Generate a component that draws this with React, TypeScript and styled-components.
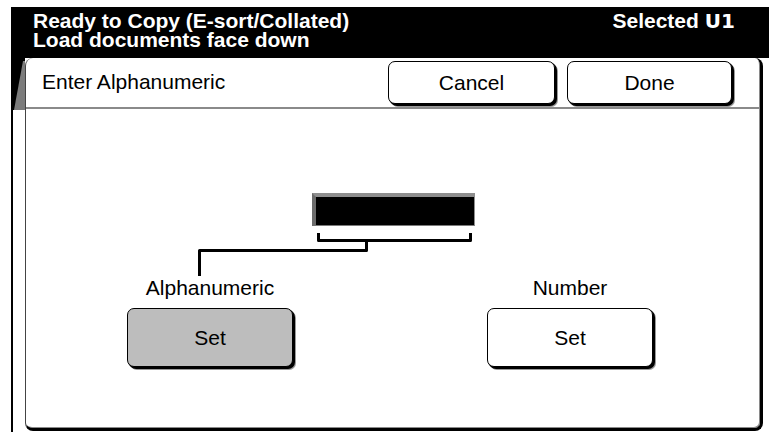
import styled, { createGlobalStyle } from "styled-components";

const GlobalStyle = createGlobalStyle`
    html, body {
        margin: 0;
        padding: 0;
        background: #fff;
    }
    body {
        font-family: "Liberation Sans", Arial, sans-serif;
        color: #000;
    }
`

const Screen = styled.div`
    width: 769px;
    height: 432px;
    padding: 7px 0 0 11px;
    box-sizing: border-box;
    display: flex;
    flex-direction: column;
    overflow: hidden;
`

const StatusBar = styled.div`
    height: 51px;
    flex: none;
    background: #000;
    color: #fff;
    display: flex;
    justify-content: space-between;
    align-items: flex-start;
    padding: 4px 34px 0 22px;
    box-sizing: border-box;
    font-weight: bold;
    font-size: 21px;
    line-height: 19px;
`

const StatusText = styled.div`
    white-space: nowrap;
`

const Selected = styled.div`
    white-space: nowrap;
`

const MachineId = styled.span`
    font-family: "DejaVu Sans", sans-serif;
    font-size: 20px;
    margin-left: 6px;
`

const Workspace = styled.div`
    flex: 1;
    display: flex;
    min-height: 0;
`

const TabEdge = styled.div`
    width: 12px;
    flex: none;
    border-left: 2px solid #000;
    display: flex;
    flex-direction: column;
`

const TabShade = styled.div`
    height: 52px;
    background: #000;
    position: relative;
    &::after {
        content: "";
        display: block;
        height: 100%;
        background: #7c7c7c;
        clip-path: polygon(10px 3px, 12px 3px, 12px 52px, 1px 52px);
    }
`

const Panel = styled.div`
    flex: 1;
    margin: 0 6px 1px 0;
    background: #fff;
    border-left: 1px solid #444;
    border-right: 3px solid #000;
    border-bottom: 3px solid #000;
    border-radius: 8px;
    display: flex;
    flex-direction: column;
    box-shadow: inset -1px -1px 0 #8a8a8a;
`

const PanelHeader = styled.div`
    height: 49px;
    flex: none;
    border-bottom: 2px solid #8a8a8a;
    display: flex;
    align-items: center;
    padding: 0 28px 0 16px;
    gap: 12px;
`

const PanelTitle = styled.div`
    flex: 1;
    font-size: 21px;
    padding-bottom: 2px;
`

const KeyButton = styled.button<{ $width: number; $height: number; $active?: boolean }>`
    width: ${p => p.$width}px;
    height: ${p => p.$height}px;
    box-sizing: border-box;
    background: ${p => (p.$active ? "#bdbdbd" : "#fff")};
    border: 1px solid #000;
    border-radius: 7px;
    box-shadow: 1px 1px 0 #000, 2px 2px 0 #000, 3px 3px 0 #9a9a9a;
    font-family: "Liberation Sans", Arial, sans-serif;
    font-size: 21px;
    color: #000;
    padding: 0;
    cursor: pointer;
`

const PanelBody = styled.div`
    flex: 1;
    display: flex;
    flex-direction: column;
`

const Readout = styled.div`
    margin: 84px 0 0 286px;
    width: 163px;
    height: 33px;
    box-sizing: border-box;
    background: #000;
    border-top: 4px solid #8e8e8e;
    border-left: 4px solid #6c6c6c;
    border-right: 1px solid #8e8e8e;
    border-bottom: 1px solid #7a7a7a;
`

const Connector = styled.svg`
    display: block;
    margin: 5px 0 0 172px;
`

const OptionRow = styled.div`
    display: flex;
    gap: 194px;
    margin-left: 101px;
`

const OptionGroup = styled.div`
    width: 166px;
    display: flex;
    flex-direction: column;
    align-items: center;
`

const OptionLabel = styled.div`
    font-size: 21px;
    line-height: 24px;
    white-space: nowrap;
    margin-bottom: 8px;
`

const options = [
    { label: "Alphanumeric", active: true },
    { label: "Number", active: false },
]

const App = () => {
    return (
        <>
            <GlobalStyle />
            <Screen>
                <StatusBar>
                    <StatusText>
                        Ready to Copy (E-sort/Collated)
                        <br />
                        Load documents face down
                    </StatusText>
                    <Selected>
                        Selected<MachineId>U1</MachineId>
                    </Selected>
                </StatusBar>
                <Workspace>
                    <TabEdge>
                        <TabShade />
                    </TabEdge>
                    <Panel>
                        <PanelHeader>
                            <PanelTitle>Enter Alphanumeric</PanelTitle>
                            <KeyButton $width={167} $height={43}>Cancel</KeyButton>
                            <KeyButton $width={165} $height={43}>Done</KeyButton>
                        </PanelHeader>
                        <PanelBody>
                            <Readout />
                            <Connector width="276" height="45" viewBox="0 0 276 45">
                                <path
                                    d="M120.5 2 V9.5 H272.5 V2 M168.5 9.5 V19.5 H1.5 V45"
                                    fill="none"
                                    stroke="#000"
                                    strokeWidth="3"
                                    strokeLinejoin="round"
                                />
                            </Connector>
                            <OptionRow>
                                {options.map(o => (
                                    <OptionGroup key={o.label}>
                                        <OptionLabel>{o.label}</OptionLabel>
                                        <KeyButton $width={166} $height={59} $active={o.active}>Set</KeyButton>
                                    </OptionGroup>
                                ))}
                            </OptionRow>
                        </PanelBody>
                    </Panel>
                </Workspace>
            </Screen>
        </>
    )
}

export default App
